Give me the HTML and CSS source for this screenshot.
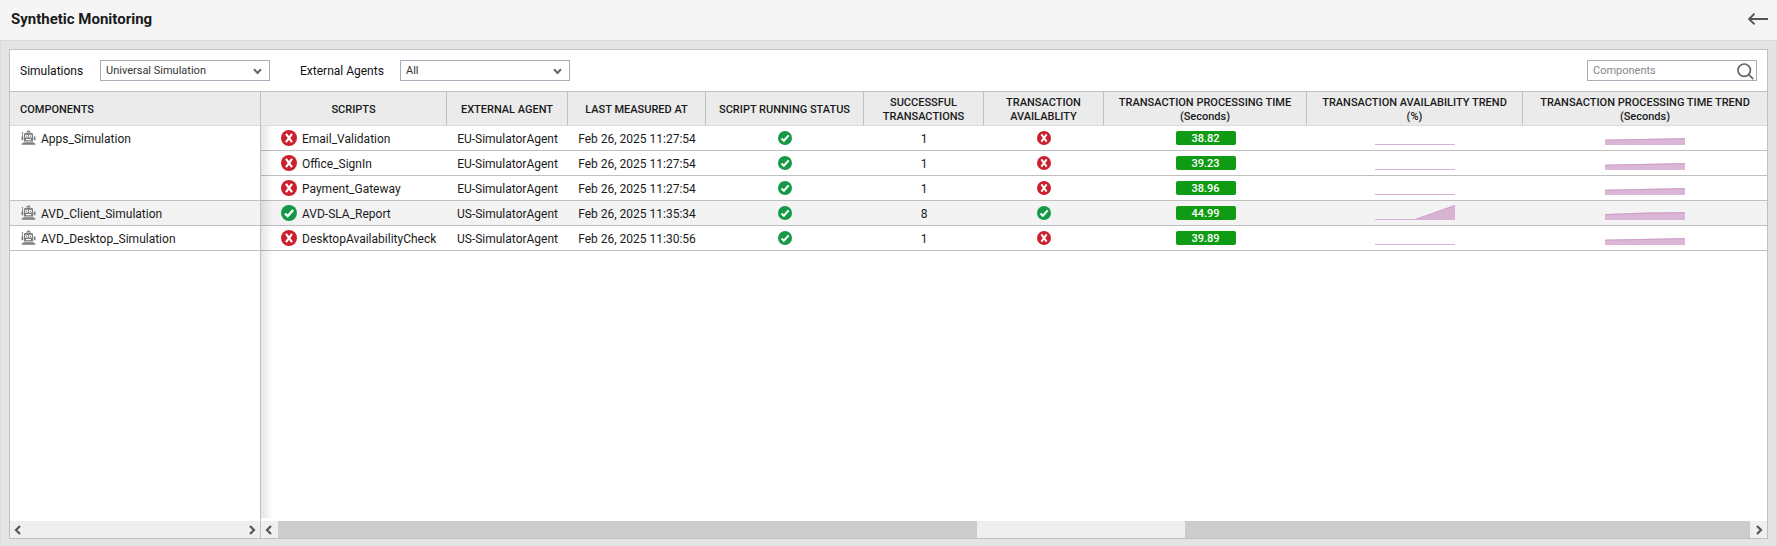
FILE: index.html
```html
<!DOCTYPE html>
<html lang="en">
<head>
<meta charset="utf-8">
<title>Synthetic Monitoring</title>
<link rel="stylesheet" href="styles.css">
</head>
<body>
<svg class="defs" width="0" height="0">
  <symbol id="ok" viewBox="0 0 16 16"><circle cx="8" cy="8" r="8" fill="#159947"/><path d="M4 8.6 6.7 11.1 12.2 5" fill="none" stroke="#fff" stroke-width="2.4"/></symbol>
  <symbol id="bad" viewBox="0 0 16 16"><circle cx="8" cy="8" r="8" fill="#cb202d"/><path d="M5 3.8 11 12.2M11 3.8 5 12.2" fill="none" stroke="#fff" stroke-width="2.2"/></symbol>
  <symbol id="bot" viewBox="0 0 15 15"><g fill="#7d7d7d"><path d="M5 2.6V1.8H6Q6.2 .2 7.5 .2T9 1.8H10V2.6ZM3 4.2Q3 3 4.2 3H10.8Q12 3 12 4.2V11.6H3Z"/><path d="M.5 6.5H2.3V10.3H.5ZM12.7 6.5H14.5V10.3H12.7ZM1 3.6H1.8V6.5H1ZM2.2 12.2H12.8V13.2H14.3V14.8H.7V13.2H2.2Z"/><circle cx="1.4" cy="2.8" r=".8"/></g><path fill="#fff" d="M5 9H10V10.2H5Z"/><circle cx="5.6" cy="6.2" r="1.6" fill="#fff"/><circle cx="9.4" cy="6.2" r="1.6" fill="#fff"/><circle cx="5.6" cy="6.2" r=".7" fill="#7d7d7d"/><circle cx="9.4" cy="6.2" r=".7" fill="#7d7d7d"/></symbol>
  <symbol id="down" viewBox="0 0 9 7"><path d="M1 1.3 4.5 4.9 8 1.3" fill="none" stroke="#666" stroke-width="2.1"/></symbol>
  <symbol id="left" viewBox="0 0 7 10"><path d="M6 1 2 5 6 9" fill="none" stroke="#555" stroke-width="2.2"/></symbol>
  <symbol id="right" viewBox="0 0 7 10"><path d="M1 1 5 5 1 9" fill="none" stroke="#555" stroke-width="2.2"/></symbol>
  <symbol id="flat" viewBox="0 0 80 15"><path d="M0 14H80V15H0Z" fill="#d9b1d3"/></symbol>
  <symbol id="rise" viewBox="0 0 80 15"><path d="M0 14H40V15H0Z" fill="#d9b1d3"/><path d="M40 14.5 80 0V15H40Z" fill="#d9b3d4"/><path d="M40 14.5 80 .5" stroke="#d0a0c8" fill="none"/></symbol>
  <symbol id="trend" viewBox="0 0 80 15"><path d="M0 9.7 80 8V15H0Z" fill="#dcb6d7"/><path d="M0 10.2 80 8.7" stroke="#d0a0c8" fill="none"/></symbol>
  <symbol id="trend2" viewBox="0 0 80 15"><path d="M0 9 40 7.5 80 7V15H0Z" fill="#dab4d5"/><path d="M0 9.7 40 8.2 80 7.8" stroke="#d0a0c8" fill="none"/></symbol>
</svg>
<header class="topbar">
  <h1 class="title">Synthetic Monitoring</h1>
  <svg class="back" width="20" height="12" viewBox="0 0 20 12"><path d="M20 6H1.2M6.5 .7 1.2 6 6.5 11.3" fill="none" stroke="#555" stroke-width="1.9"/></svg>
</header>
<main class="stage">
  <section class="panel">
    <div class="filters">
      <span class="label label-sim">Simulations</span>
      <div class="select"><span>Universal Simulation</span><svg width="9" height="7"><use href="#down"/></svg></div>
      <span class="label label-agent">External Agents</span>
      <div class="select"><span>All</span><svg width="9" height="7"><use href="#down"/></svg></div>
      <div class="search"><span>Components</span><svg width="17" height="17" viewBox="0 0 17 17"><g fill="none" stroke="#666" stroke-width="1.7"><circle cx="7.2" cy="7.2" r="6.2"/><path d="M11.7 11.7 16.2 16.2"/></g></svg></div>
    </div>
    <div class="grid">
      <div class="pane pane-left">
        <div class="head head-left">COMPONENTS</div>
        <div class="comp comp-tall"><svg width="15" height="15"><use href="#bot"/></svg>Apps_Simulation</div>
        <div class="comp alt"><svg width="15" height="15"><use href="#bot"/></svg>AVD_Client_Simulation</div>
        <div class="comp"><svg width="15" height="15"><use href="#bot"/></svg>AVD_Desktop_Simulation</div>
        <div class="scroll scroll-left"><svg width="7" height="10"><use href="#left"/></svg><svg width="7" height="10"><use href="#right"/></svg></div>
      </div>
      <div class="pane pane-right">
        <div class="row head">
          <div>SCRIPTS</div><div>EXTERNAL AGENT</div><div>LAST MEASURED AT</div><div>SCRIPT RUNNING STATUS</div><div>SUCCESSFUL<br>TRANSACTIONS</div><div>TRANSACTION<br>AVAILABLITY</div><div>TRANSACTION PROCESSING TIME<br>(Seconds)</div><div>TRANSACTION AVAILABILITY TREND<br>(%)</div><div>TRANSACTION PROCESSING TIME TREND<br>(Seconds)</div>
        </div>
        <div class="body">
          <div class="row data"><div class="text script"><svg class="big"><use href="#bad"/></svg>Email_Validation</div><div class="text">EU-SimulatorAgent</div><div class="text">Feb 26, 2025 11:27:54</div><div><svg class="small"><use href="#ok"/></svg></div><div class="text">1</div><div><svg class="small"><use href="#bad"/></svg></div><div><b class="badge">38.82</b></div><div><svg class="spark"><use href="#flat"/></svg></div><div><svg class="spark"><use href="#trend"/></svg></div></div>
          <div class="row data"><div class="text script"><svg class="big"><use href="#bad"/></svg>Office_SignIn</div><div class="text">EU-SimulatorAgent</div><div class="text">Feb 26, 2025 11:27:54</div><div><svg class="small"><use href="#ok"/></svg></div><div class="text">1</div><div><svg class="small"><use href="#bad"/></svg></div><div><b class="badge">39.23</b></div><div><svg class="spark"><use href="#flat"/></svg></div><div><svg class="spark"><use href="#trend"/></svg></div></div>
          <div class="row data"><div class="text script"><svg class="big"><use href="#bad"/></svg>Payment_Gateway</div><div class="text">EU-SimulatorAgent</div><div class="text">Feb 26, 2025 11:27:54</div><div><svg class="small"><use href="#ok"/></svg></div><div class="text">1</div><div><svg class="small"><use href="#bad"/></svg></div><div><b class="badge">38.96</b></div><div><svg class="spark"><use href="#flat"/></svg></div><div><svg class="spark"><use href="#trend"/></svg></div></div>
          <div class="row data alt"><div class="text script"><svg class="big"><use href="#ok"/></svg>AVD-SLA_Report</div><div class="text">US-SimulatorAgent</div><div class="text">Feb 26, 2025 11:35:34</div><div><svg class="small"><use href="#ok"/></svg></div><div class="text">8</div><div><svg class="small"><use href="#ok"/></svg></div><div><b class="badge">44.99</b></div><div><svg class="spark"><use href="#rise"/></svg></div><div><svg class="spark"><use href="#trend2"/></svg></div></div>
          <div class="row data"><div class="text script"><svg class="big"><use href="#bad"/></svg>DesktopAvailabilityCheck</div><div class="text">US-SimulatorAgent</div><div class="text">Feb 26, 2025 11:30:56</div><div><svg class="small"><use href="#ok"/></svg></div><div class="text">1</div><div><svg class="small"><use href="#bad"/></svg></div><div><b class="badge">39.89</b></div><div><svg class="spark"><use href="#flat"/></svg></div><div><svg class="spark"><use href="#trend"/></svg></div></div>
        </div>
        <div class="scroll scroll-right"><span class="arrow"><svg width="7" height="10"><use href="#left"/></svg></span><span class="track"></span><span class="thumb"></span><span class="track rest"></span><span class="arrow arrow-end"><svg width="7" height="10"><use href="#right"/></svg></span></div>
      </div>
    </div>
  </section>
</main>
</body>
</html>
```
FILE: styles.css
```css
* { box-sizing: border-box; }
html, body { height: 100%; }
body {
  margin: 0;
  display: flex;
  flex-direction: column;
  overflow: hidden;
  font: 12px/16px Roboto, sans-serif;
  color: #1a1a1a;
  background: #e3e4e6;
}
svg { display: block; flex: none; }
.defs { display: none; }

.topbar {
  height: 41px;
  flex: none;
  display: flex;
  align-items: center;
  justify-content: space-between;
  padding: 0 9px 3px 11px;
  background: #f5f5f5;
  border-bottom: 1px solid #dadadb;
}
.title { margin: 0; font-size: 15px; line-height: 20px; font-weight: 700; }
.back { margin-top: 1px; }

.stage {
  flex: 1;
  min-height: 0;
  padding: 8px 8px 7px;
  border: solid #d9dadc;
  border-width: 0 1px;
}
.panel {
  height: 100%;
  display: flex;
  flex-direction: column;
  background: #fff;
  border: 1px solid #c0c0c0;
}

.filters {
  height: 41px;
  flex: none;
  display: flex;
  align-items: center;
  padding: 0 10px;
}
.label { color: #111; }
.label-sim { width: 80px; }
.label-agent { width: 100px; margin-left: 30px; }
.select, .search {
  width: 170px;
  height: 21px;
  display: flex;
  align-items: center;
  justify-content: space-between;
  border: 1px solid #a9adba;
  font-size: 11px;
  color: #333;
}
.select { padding: 1px 7px 0 5px; }
.select svg { margin-top: 1px; }
.search { margin-left: auto; padding: 1px 2px 0 5px; color: #888; }

.grid { flex: 1; display: flex; min-height: 0; border-top: 1px solid #c0c0c0; }
.pane { display: flex; flex-direction: column; }
.pane-left { width: 251px; flex: none; border-right: 1px solid #c0c0c0; }
.pane-right { flex: 1; min-width: 0; }

.head {
  height: 34px;
  flex: none;
  font-size: 11px;
  line-height: 14px;
  font-weight: 500;
  background: #ebebeb;
  border-bottom: 1px solid #dcdcdc;
}
.head-left { display: flex; align-items: center; padding: 2px 0 0 10px; }
.row {
  display: grid;
  grid-template-columns: 186px 121px 138px 158px 120px 120px 203px 216px 1fr;
}
.row > div {
  display: flex;
  align-items: center;
  justify-content: center;
  text-align: center;
  white-space: nowrap;
}
.head > div { padding-top: 2px; border-right: 1px solid #c0c0c0; }
.head > div:last-child { border-right: 0; }

.comp, .data { height: 25px; flex: none; border-bottom: 1px solid #c0c0c0; }
.comp { display: flex; align-items: flex-start; padding: 5px 0 0 11px; gap: 5px; }
.comp svg { margin-top: -1px; }
.comp-tall { height: 75px; }
.alt { background: #f3f3f3; }

.body { flex: 1; position: relative; }
.body::before {
  content: "";
  position: absolute;
  inset: 0 auto 3px 0;
  width: 12px;
  background: linear-gradient(90deg, rgba(0, 0, 0, .1), rgba(0, 0, 0, 0));
}
.data > .text { padding-top: 2px; }
.data > .script { justify-content: flex-start; padding-left: 20px; gap: 5px; }
.big { width: 16px; height: 16px; margin-bottom: 2px; }
.small { width: 14px; height: 14px; }
.spark { width: 80px; height: 15px; margin-bottom: 1px; }
.badge {
  width: 60px;
  height: 14px;
  border-radius: 2px;
  font-size: 11px;
  line-height: 15px;
  font-weight: 500;
  color: #fff;
  background: #0f9b13;
}

.scroll { height: 17px; flex: none; display: flex; background: #efefef; }
.scroll-left { margin-top: auto; align-items: center; justify-content: space-between; padding: 0 4px; }
.arrow { flex: none; width: 17px; display: flex; align-items: center; padding-left: 4px; }
.arrow-end { padding-left: 6px; }
.track { flex: none; width: 699px; background: #ccc; }
.thumb { flex: none; width: 208px; }
.rest { flex: 1; width: auto; }
```
